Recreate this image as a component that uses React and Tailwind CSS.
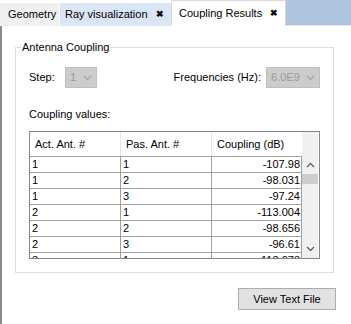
import React from "react";

const rows = [
  ["1", "1", "-107.98"],
  ["1", "2", "-98.031"],
  ["1", "3", "-97.24"],
  ["2", "1", "-113.004"],
  ["2", "2", "-98.656"],
  ["2", "3", "-96.61"],
  ["3", "1", "-113.073"],
];

function Chevron({ up, color = "#a6a6a6" }) {
  return (
    <svg width="9" height="6" viewBox="0 0 9 6">
      <polyline
        points={up ? "1,5 4.5,1.5 8,5" : "1,1 4.5,4.5 8,1"}
        fill="none"
        stroke={color}
        strokeWidth="1.3"
      />
    </svg>
  );
}

function Combo({ value, width }) {
  return (
    <div
      className={
        "h-[21px] flex items-center justify-between pl-[4px] pr-[4px] bg-[#cccccc] border border-[#bfbfbf] text-[#9a9a9a] " +
        width
      }
    >
      <span>{value}</span>
      <Chevron />
    </div>
  );
}

function Tab({ label, closable, active, className }) {
  return (
    <div
      className={
        "flex items-center gap-[8px] " +
        (active
          ? "h-[26px] w-[115px] bg-white border-x border-t border-[#d9d9d9] pl-[7px]"
          : "h-[23px] ") +
        " " +
        (className || "")
      }
    >
      <span className="whitespace-nowrap">{label}</span>
      {closable && <span className="font-bold text-[9px] leading-none">✖</span>}
    </div>
  );
}

export default function App() {
  return (
    <div className="w-[351px] h-[324px] bg-white text-black text-[11px] font-['Liberation_Sans',Arial,sans-serif] flex flex-col overflow-hidden">
      <div className="h-[26px] flex items-end shrink-0">
        <Tab label="Geometry" className="w-[60px] bg-[#f0f0f0] pl-[8px] border-r border-white" />
        <Tab label="Ray visualization" closable className="w-[111px] bg-[#dae6f5] pl-[5px]" />
        <Tab label="Coupling Results" closable active />
        <div className="flex-1 h-[26px] bg-[#afc4de] border-b border-[#e6e6e6]" />
      </div>

      <div className="flex-1 border-l-2 border-[#8a8a8a] flex flex-col">
        <fieldset className="ml-[13px] mr-[17px] mt-[14px] border border-[#dcdcdc] p-0">
          <legend className="ml-[5px] px-[1px] leading-[14px]">Antenna Coupling</legend>
          <div className="px-[13px] pb-[13px]">
            <div className="mt-[13px] flex items-center">
              <span className="w-[36px]">Step:</span>
              <Combo value="1" width="w-[32px]" />
              <span className="ml-auto mr-[5px]">Frequencies (Hz):</span>
              <Combo value="6.0E9" width="w-[54px]" />
            </div>
            <div className="mt-[19px] leading-[14px]">Coupling values:</div>
            <div className="mt-[10px] h-[128px] border border-[#828790] flex overflow-hidden">
              <div className="w-[272px] flex flex-col">
                <div className="h-[24px] grid grid-cols-[91px_91px_90px] shrink-0">
                  <div className="flex items-center pl-[5px] border-r border-[#e5e5e5]">Act. Ant. #</div>
                  <div className="flex items-center pl-[5px] border-r border-[#e5e5e5]">Pas. Ant. #</div>
                  <div className="flex items-center pl-[5px]">Coupling (dB)</div>
                </div>
                {rows.map((r, i) => (
                  <div
                    key={i}
                    className="h-[16px] shrink-0 grid grid-cols-[91px_91px_90px] border-t border-[#a0a0a0] leading-[15px]"
                  >
                    <div className="pl-[2px] border-r border-[#a0a0a0]">{r[0]}</div>
                    <div className="pl-[2px] border-r border-[#a0a0a0]">{r[1]}</div>
                    <div className="pr-[1px] text-right border-r border-[#a0a0a0]">{r[2]}</div>
                  </div>
                ))}
              </div>
              <div className="w-[16px] bg-[#f0f0f0] flex flex-col">
                <div className="h-[24px]" />
                <div className="h-[18px] flex items-center justify-center">
                  <Chevron up color="#606060" />
                </div>
                <div className="h-[10px] bg-[#cdcdcd]" />
                <div className="flex-1" />
                <div className="h-[18px] flex items-center justify-center">
                  <Chevron color="#606060" />
                </div>
              </div>
            </div>
          </div>
        </fieldset>
        <div className="flex justify-end mr-[15px] mt-[15px]">
          <button className="w-[98px] h-[22px] bg-[#e1e1e1] border border-[#adadad] text-[11px]">
            View Text File
          </button>
        </div>
      </div>
    </div>
  );
}
